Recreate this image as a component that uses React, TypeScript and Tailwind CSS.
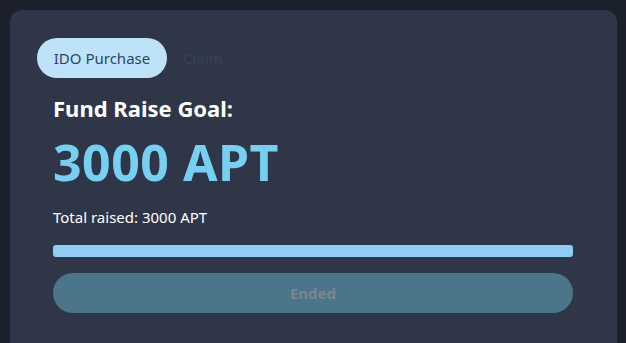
export default function App() {
  return (
    <div
      className="min-h-screen bg-[#1b202c] pt-[10px] pl-[10px] pr-[9px]"
      style={{ fontFamily: '"Noto Sans", "Open Sans", sans-serif' }}
    >
      <div className="h-[333px] rounded-t-xl bg-[#2e3648] pt-[28px] pl-[27px] pr-[44px]">
        <div className="flex items-center gap-4">
          <button className="h-[40px] w-[130px] rounded-full bg-[#bee3f8] text-[15px] text-[#2c4766]">
            IDO Purchase
          </button>
          <button className="text-[15px] text-[#3a4254]">Claim</button>
        </div>
        <div className="pl-[16px]">
          <h2 className="mt-[16px] text-[22px] font-bold leading-[28px] text-white">Fund Raise Goal:</h2>
          <div className="mt-[12px] text-[50px] font-bold leading-[56px] tracking-[0.5px] text-[#76d0f2]">3000 APT</div>
          <p className="mt-[17px] text-[15px] leading-[20px] text-white">Total raised: 3000 APT</p>
          <div className="mt-[18px] h-[12px] w-full rounded-[3px] bg-[#90cdf4]" />
          <button className="mt-[16px] flex h-[40px] w-full items-center justify-center rounded-full bg-[#4b7589] text-[15px] font-bold text-[#7b8590]">
            Ended
          </button>
        </div>
      </div>
    </div>
  );
}
